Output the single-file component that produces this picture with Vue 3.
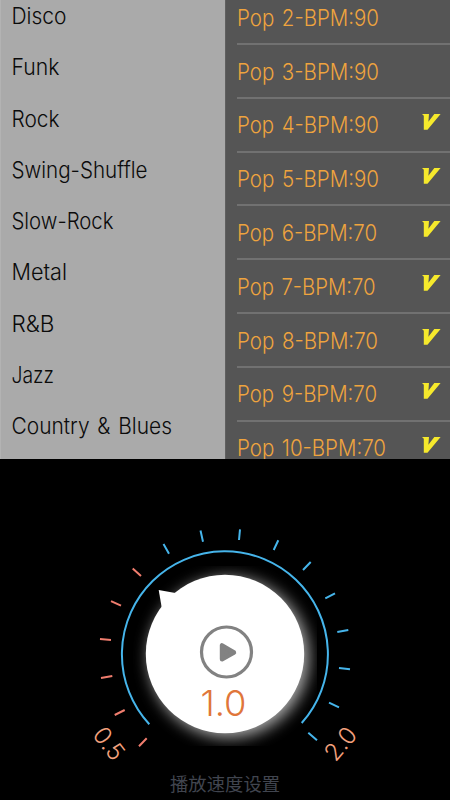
<script setup>
const genres = [
  { name: 'Disco', width: 55 },
  { name: 'Funk', width: 48 },
  { name: 'Rock', width: 48 },
  { name: 'Swing-Shuffle', width: 136 },
  { name: 'Slow-Rock', width: 102 },
  { name: 'Metal', width: 55.5 },
  { name: 'R&B', width: 43 },
  { name: 'Jazz', width: 42.5 },
  { name: 'Country & Blues', width: 160.5 },
]
const rhythms = [
  { name: 'Pop 2-BPM:90', width: 142, vip: false },
  { name: 'Pop 3-BPM:90', width: 142, vip: false },
  { name: 'Pop 4-BPM:90', width: 142, vip: true },
  { name: 'Pop 5-BPM:90', width: 142, vip: true },
  { name: 'Pop 6-BPM:70', width: 140, vip: true },
  { name: 'Pop 7-BPM:70', width: 138.5, vip: true },
  { name: 'Pop 8-BPM:70', width: 141, vip: true },
  { name: 'Pop 9-BPM:70', width: 140, vip: true },
  { name: 'Pop 10-BPM:70', width: 149, vip: true },
]
const slowTicks =
  'M132.7 568.5L141 576M111 601.2L121 605.7M100 639L111 640M101 678L112.3 676M114.7 715L124.7 710M139 746.3L146.7 738.3'
const fastTicks =
  'M200.5 530.5L203 541.7M163.5 544L169 553.7M240 529.3L239 540M278.3 540.3L273.7 550M310.7 562L303 570M335 593.3L325.3 598.3M348.3 630L337.3 632M339 668L350 669.3M329 702.7L339 707.3M308.3 732.7L317 740.3'
</script>

<template>
  <main class="screen">
    <section class="lists">
      <nav class="genres">
        <div v-for="g in genres" :key="g.name" class="genre">
          <svg class="label" width="200" height="30">
            <text x="0.5" y="22.5" :textLength="g.width" lengthAdjust="spacingAndGlyphs">{{ g.name }}</text>
          </svg>
        </div>
      </nav>
      <div class="rhythms">
        <div v-for="r in rhythms" :key="r.name" class="rhythm">
          <svg class="label" width="170" height="30">
            <text x="0" y="22" :textLength="r.width" lengthAdjust="spacingAndGlyphs">{{ r.name }}</text>
          </svg>
          <svg v-if="r.vip" class="vip" width="19" height="16" viewBox="0 0 19 16">
            <path d="M0 0H7L6.4 7.8L12.3 0H18.6L5.5 15.7H1.8V1.7Z" />
          </svg>
        </div>
      </div>
    </section>
    <section class="speed">
      <svg class="dial" width="450" height="341" viewBox="0 459 450 341">
        <defs>
          <filter id="soft" x="-30%" y="-30%" width="160%" height="160%">
            <feGaussianBlur stdDeviation="8" />
          </filter>
          <clipPath id="glowBox"><rect x="133" y="566" width="184" height="180" /></clipPath>
        </defs>
        <g clip-path="url(#glowBox)">
          <circle cx="229" cy="657.5" r="79.5" fill="#fff" opacity=".7" filter="url(#soft)" />
        </g>
        <path class="arc" d="M149.3 724.3A103 103 0 1 1 301.7 723" />
        <path class="tick slow" :d="slowTicks" />
        <path class="tick fast" :d="fastTicks" />
        <circle cx="225" cy="654" r="79.2" fill="#fff" />
        <path d="M158.7 590L175.3 593L170 606L161.7 607.5Z" fill="#fff" />
        <circle class="ring" cx="226.5" cy="652" r="25" />
        <path class="play" d="M222 645.3V659.3L234 652.5Z" />
        <text class="value" x="200.5" y="716" textLength="46" lengthAdjust="spacingAndGlyphs">1.0</text>
        <text class="limit" text-anchor="middle" transform="translate(109 743.5) rotate(52)" y="8.5">0.5</text>
        <text class="limit" text-anchor="middle" transform="translate(340.5 743.5) rotate(-50)" y="8.5">2.0</text>
        <text class="caption" x="170" y="791" textLength="110">播放速度设置</text>
      </svg>
    </section>
  </main>
</template>

<style>
body { margin: 0; background: #000; overflow: hidden; }
</style>

<style scoped>
.screen {
  width: 450px;
  height: 800px;
  display: flex;
  flex-direction: column;
  background: #000;
  overflow: hidden;
  font-family: Inter, "Noto Sans CJK SC", sans-serif;
}
.lists {
  height: 459px;
  display: grid;
  grid-template-columns: 225px 225px;
  overflow: hidden;
}
svg { display: block; }
.genres {
  height: 459px;
  box-sizing: border-box;
  padding: 1px 0 0 10px;
  background: #aaa;
  border-left: 1px solid #b3b3b3;
  overflow: hidden;
}
.genre { height: 51.3px; }
.label { font-size: 22.3px; font-weight: 350; word-spacing: 2px; }
.genre .label { fill: #0b0b0b; }
.rhythms {
  height: 459px;
  box-sizing: border-box;
  padding-left: 11px;
  background: #555;
  border-left: 1px solid #606060;
  overflow: hidden;
}
.rhythm {
  height: 53.8px;
  box-sizing: border-box;
  border-bottom: 2px solid #717171;
  display: flex;
  justify-content: space-between;
  align-items: flex-start;
  padding: 12.6px 9px 0 0;
}
.rhythm:first-child { height: 45px; padding-top: 4px; }
.rhythm .label { fill: #efa43e; }
.vip { margin-top: 2.4px; fill: #f6e92c; }
.arc { fill: none; stroke: #46b5eb; stroke-width: 2; }
.tick { fill: none; stroke-width: 2; }
.slow { stroke: #f07d6e; }
.fast { stroke: #46b5eb; }
.ring { fill: none; stroke: #828282; stroke-width: 3.2; }
.play { fill: #828282; stroke: #828282; stroke-width: 4.4; stroke-linejoin: round; }
.value { font-size: 36px; font-weight: 350; fill: #e0763a; }
.limit { font-size: 24px; font-weight: 350; fill: #f3a17d; }
.caption { font-size: 18.3px; font-weight: 400; fill: #41454f; }
</style>
